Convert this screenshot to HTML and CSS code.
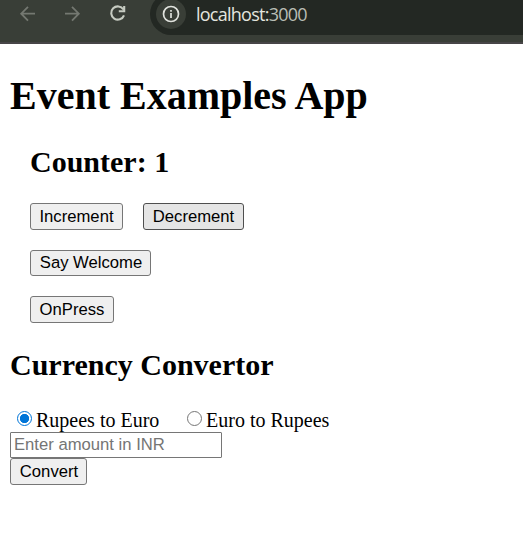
FILE: index.html
```
<!DOCTYPE html>
<html lang="en">
<head>
<meta charset="utf-8">
<title>Event Examples App</title>
<link rel="stylesheet" href="styles.css">
</head>
<body>
<header class="toolbar">
  <svg class="nav" width="150" height="35" viewBox="0 0 150 35" fill="none" stroke-width="1.8">
    <path class="dim" d="M35 13.7H21.5M28 6.8L21.2 13.7L28 20.6"/>
    <path class="dim" d="M65 13.7H78.5M72 6.8L78.8 13.7L72 20.6"/>
    <path class="lit" d="M123.4 9.5A6.6 6.6 0 1 0 124 15.3M124.2 6V11.2H118.8"/>
  </svg>
  <div class="address">
    <span class="info">
      <svg width="18" height="18" viewBox="0 0 18 18" fill="none" stroke="#e0e2dd" stroke-width="1.7">
        <circle cx="9" cy="9" r="7.5"/>
        <path d="M9 8V13M9 5V6.8"/>
      </svg>
    </span>
    <span class="url">localhost:<span class="port">3000</span></span>
  </div>
</header>
<main class="app">
  <h1>Event Examples App</h1>
  <section class="counter">
    <h2>Counter: 1</h2>
    <div class="row">
      <button class="increment">Increment</button>
      <button class="decrement">Decrement</button>
    </div>
    <div class="row"><button class="welcome">Say Welcome</button></div>
    <div class="row"><button class="press">OnPress</button></div>
  </section>
  <section class="converter">
    <h2>Currency Convertor</h2>
    <div class="choices">
      <label class="first"><input type="radio" name="direction" checked>Rupees to Euro</label>
      <label><input type="radio" name="direction">Euro to Rupees</label>
    </div>
    <input class="amount" type="text" placeholder="Enter amount in INR">
    <button class="convert">Convert</button>
  </section>
</main>
</body>
</html>
```
FILE: styles.css
```
* { box-sizing: border-box; }
body {
  margin: 0;
  background: #fff;
  color: #000;
  font: 20px/23px "Liberation Serif", "Times New Roman", serif;
}
.toolbar {
  display: flex;
  height: 44px;
  background: #393e37;
  border-bottom: 2px solid #474547;
  overflow: hidden;
}
.nav { flex: none; }
.dim { stroke: #747871; }
.lit { stroke: #c6cbc1; stroke-width: 2.1; }
.address {
  display: flex;
  align-items: center;
  flex: 1;
  height: 42px;
  margin-top: -7px;
  padding-left: 6px;
  background: #232823;
  border-radius: 21px 0 0 21px;
}
.info {
  display: flex;
  align-items: center;
  justify-content: center;
  width: 30px;
  height: 30px;
  border-radius: 50%;
  background: #393e37;
}
.url {
  margin-left: 10px;
  color: #e3e5df;
  font: 18px/24px "Open Sans", "Noto Sans", sans-serif;
  letter-spacing: -0.75px;
}
.port { color: #b9bdb5; }
.app { padding: 28px 10px 0; }
h1 { margin: 0; font-size: 40px; line-height: 48px; }
h2 { margin: 0; font-size: 30px; line-height: 34px; }
.counter { padding: 25px 20px 0; }
.row { display: flex; gap: 20px; margin-bottom: 20px; }
.counter h2 { margin-bottom: 24px; }
button {
  display: block;
  height: 27px;
  padding: 0;
  border: 1px solid #767676;
  border-radius: 3px;
  background: #efefef;
  color: #000;
  font: 16.67px/23px "Liberation Sans", Arial, sans-serif;
}
.increment { width: 93px; }
.decrement { width: 101px; background: #e5e5e5; border-color: #4f4f4f; }
.welcome { width: 121px; height: 26px; line-height: 22px; padding: 0 0 1px 1px; }
.press { width: 84px; }
.convert { width: 77px; padding-left: 1px; }
.converter { padding-top: 5px; }
.choices { display: flex; height: 23px; margin-top: 27px; }
label { display: flex; }
.first { width: 170px; }
input[type="radio"] {
  appearance: none;
  width: 15px;
  height: 15px;
  margin: 2px 4.5px 0 6.5px;
  border: 1px solid #767676;
  border-radius: 50%;
}
input[type="radio"]:checked {
  border-color: #0075d8;
  background: radial-gradient(circle, #0075d8 4.3px, #fff 5px);
}
.amount {
  display: block;
  width: 212px;
  height: 26px;
  padding: 0 3px;
  border: 1px solid #767676;
  border-radius: 1px;
  font: 16.67px/22px "Liberation Sans", Arial, sans-serif;
}
.amount::placeholder { color: #757575; }
```
